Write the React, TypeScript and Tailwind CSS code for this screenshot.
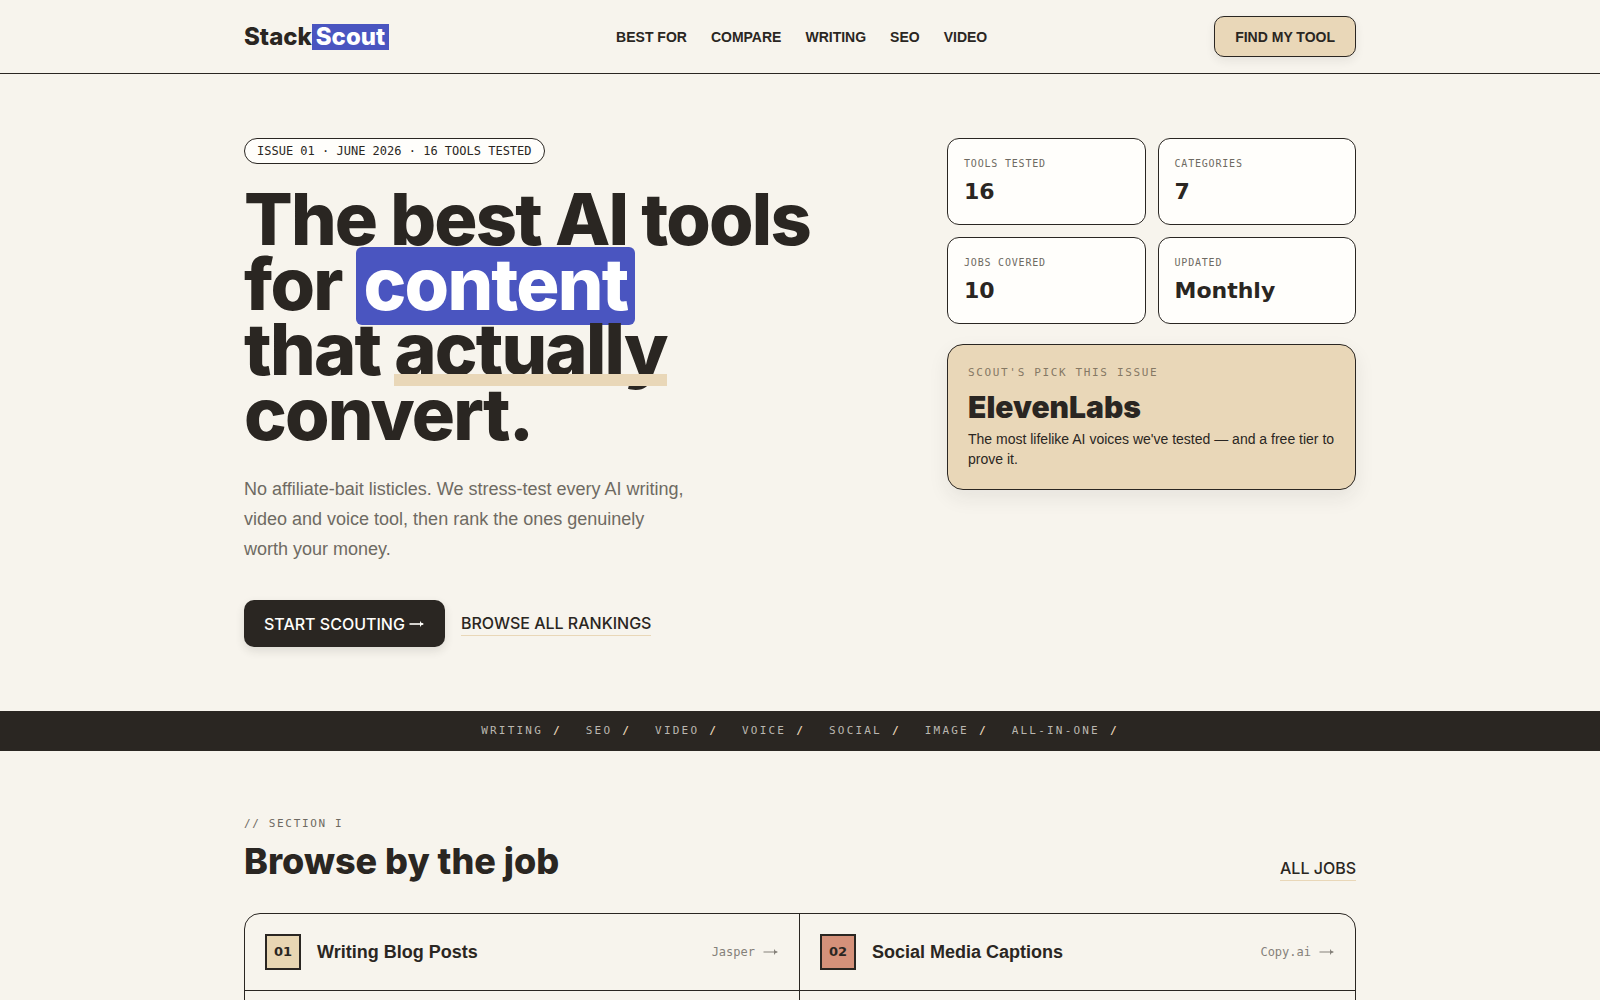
import React from 'react';

const navItems = [
  { name: 'Best for', href: '#best-for' },
  { name: 'Compare', href: '#compare' },
  { name: 'Writing', href: '#writing' },
  { name: 'SEO', href: '#seo' },
  { name: 'Video', href: '#video' },
];

const stats = [
  { label: 'Tools tested', value: '16' },
  { label: 'Categories', value: '7' },
  { label: 'Jobs covered', value: '10' },
  { label: 'Updated', value: 'Monthly' },
];

const categories = ['Writing', 'SEO', 'Video', 'Voice', 'Social', 'Image', 'All-in-one'];

const jobs = [
  { number: '01', title: 'Writing Blog Posts', tool: 'Jasper', color: 'bg-[#e8d6b3]' },
  { number: '02', title: 'Social Media Captions', tool: 'Copy.ai', color: 'bg-[#d5917a]' },
];

const mono = "font-['DejaVu_Sans_Mono',monospace]";
const display = 'font-[Inter,sans-serif] font-extrabold';
const link = 'font-[Inter,sans-serif] text-base font-medium uppercase';
const container = 'max-w-[1160px] mx-auto px-6';

const Arrow = ({ strokeWidth = 1 }: { strokeWidth?: number }) => (
  <svg width="16" height="8" viewBox="0 0 16 8" fill="none" stroke="currentColor" strokeWidth={strokeWidth} aria-hidden="true">
    <path d="M0.5 4H14" />
    <path d="M11 0.8C11.8 2.6 13.2 3.6 15.2 4C13.2 4.4 11.8 5.4 11 7.2Z" fill="currentColor" stroke="none" />
  </svg>
);

const Header = () => (
  <header className="border-b border-[#2a2622]">
    <div className={`${container} flex justify-between items-center py-4`}>
      <a href="#top" className={`${display} flex items-center text-2xl leading-[26px]`}>
        Stack
        <span className="bg-[#4a55c0] text-white px-1">Scout</span>
      </a>
      <nav className="flex gap-6 text-sm font-semibold uppercase">
        {navItems.map((item) => (
          <a key={item.name} href={item.href}>
            {item.name}
          </a>
        ))}
      </nav>
      <button className="bg-[#e9d7b8] border border-[#2a2622] rounded-[10px] px-5 h-[41px] text-sm font-semibold uppercase shadow-[0_4px_10px_rgba(42,38,34,0.08)]">
        Find my tool
      </button>
    </div>
  </header>
);

const Hero = () => (
  <section className={`${container} grid grid-cols-[minmax(0,1fr)_409px] gap-12 py-16`}>
    <div>
      <p className={`${mono} inline-block align-top bg-[#fffefb] border border-[#2a2622] rounded-full px-3 py-1 text-xs leading-4 uppercase`}>
        Issue 01 · June 2026 · 16 tools tested
      </p>
      <h1 className={`${display} mt-[22px] text-[72px] leading-[65px] tracking-tight`}>
        The best AI tools
        <br />
        for{' '}
        <span className="inline-block -mt-[5px] -mb-[9px] pb-1 leading-[74px] bg-[#4a55c0] text-white rounded-md px-2">
          content
        </span>
        <br />
        that{' '}
        <span className="relative inline-block">
          actually
          <span className="absolute left-0 -bottom-[5px] w-full h-3 bg-[#e9d7b8]" />
        </span>
        <br />
        convert.
      </h1>
      <p className="mt-7 max-w-[444px] text-lg leading-[30px] text-[#6e6a62]">
        No affiliate-bait listicles. We stress-test every AI writing, video and voice tool, then rank the ones genuinely
        worth your money.
      </p>
      <div className="mt-9 flex items-center gap-4">
        <button
          className={`${link} flex items-center gap-1 bg-[#2a2622] text-[#fffefb] rounded-[10px] px-5 h-[47px] shadow-[0_4px_10px_rgba(42,38,34,0.12)]`}
        >
          Start scouting
          <Arrow strokeWidth={1.6} />
        </button>
        <a href="#rankings" className={`${link} border-b border-[#e9d7b8]`}>
          Browse all rankings
        </a>
      </div>
    </div>

    <div>
      <dl className="grid grid-cols-2 gap-3">
        {stats.map((stat) => (
          <div key={stat.label} className="bg-[#fffefb] border border-[#2a2622] rounded-xl p-4">
            <dt className={`${mono} text-[10px] leading-[17px] tracking-[0.08em] uppercase text-[#6e6a62]`}>
              {stat.label}
            </dt>
            <dd className="mt-1 font-['DejaVu_Sans',sans-serif] text-[22px] leading-8 font-bold">{stat.value}</dd>
          </div>
        ))}
      </dl>
      <div className="mt-5 bg-[#e9d7b8] border border-[#2a2622] rounded-2xl p-5 shadow-[0_8px_20px_rgba(42,38,34,0.08)]">
        <p className={`${mono} text-[11px] leading-4 tracking-[0.15em] uppercase text-[#857864]`}>
          Scout's pick this issue
        </p>
        <h2 className="mt-2 font-[Inter,sans-serif] text-[30px] leading-9 font-black">ElevenLabs</h2>
        <p className="mt-1 text-sm leading-5">The most lifelike AI voices we've tested — and a free tier to prove it.</p>
      </div>
    </div>
  </section>
);

const CategoryStrip = () => (
  <div className={`${mono} bg-[#2a2622] py-3 text-[11px] leading-4 tracking-[0.2em] uppercase`}>
    <ul className="flex justify-center gap-6">
      {categories.map((category) => (
        <li key={category} className="flex gap-[10px] text-[#bab7b0]">
          {category} <span className="font-bold text-[#e9d7b8]">/</span>
        </li>
      ))}
    </ul>
  </div>
);

const Jobs = () => (
  <section className={`${container} pt-16`}>
    <div className="flex justify-between items-end">
      <div>
        <p className={`${mono} text-[11px] leading-[18px] tracking-[0.15em] uppercase text-[#6e6a62]`}>// Section I</p>
        <h2 className={`${display} mt-2 text-4xl leading-10`}>Browse by the job</h2>
      </div>
      <a href="#jobs" className={`${link} border-b border-[#e9d7b8]`}>
        All jobs
      </a>
    </div>
    <div className="mt-8 border border-[#2a2622] rounded-t-2xl overflow-hidden">
      <ul className="grid grid-cols-2 divide-x divide-[#2a2622] border-b border-[#2a2622]">
        {jobs.map((job) => (
          <li key={job.number}>
            <a href={`#job-${job.number}`} className="flex items-center gap-4 p-5">
              <span
                className={`${job.color} flex items-center justify-center size-9 border-2 border-[#2a2622] font-['DejaVu_Sans',sans-serif] text-[13px] font-bold`}
              >
                {job.number}
              </span>
              <span className="text-lg leading-6 font-semibold">{job.title}</span>
              <span className={`${mono} ml-auto flex items-center gap-2 text-xs leading-4 text-[#85817a]`}>
                {job.tool}
                <Arrow />
              </span>
            </a>
          </li>
        ))}
      </ul>
      <div className="grid grid-cols-2 divide-x divide-[#2a2622] h-19">
        <div />
        <div />
      </div>
    </div>
  </section>
);

const App = () => (
  <div
    id="top"
    className="h-screen overflow-hidden bg-[#f7f4ed] text-[#2a2622] font-['Liberation_Sans',Arial,sans-serif]"
  >
    <Header />
    <main>
      <Hero />
      <CategoryStrip />
      <Jobs />
    </main>
  </div>
);

export default App;
